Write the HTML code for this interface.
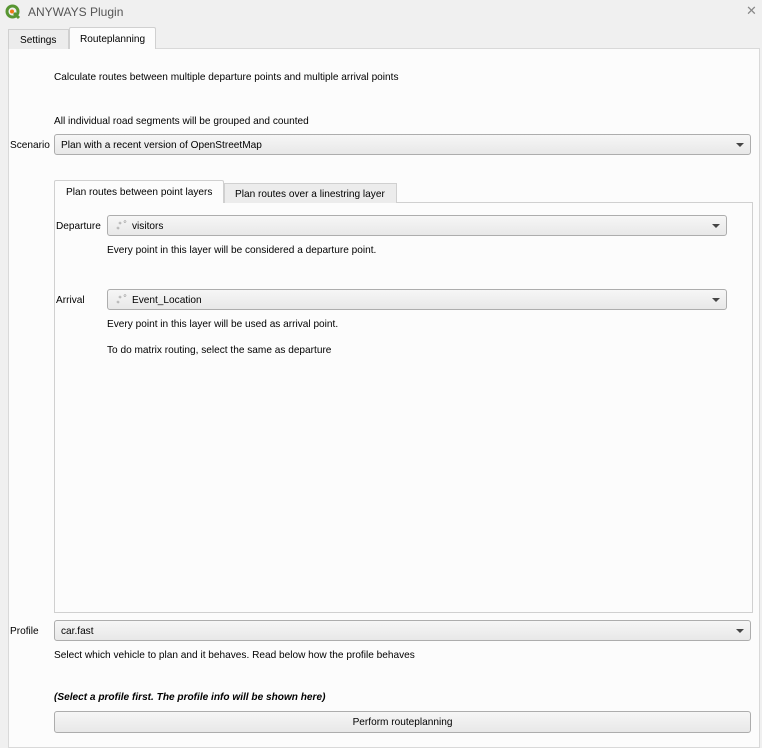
<!DOCTYPE html>
<html><head><style>
body{margin:0;width:762px;height:741px;background:#f0f0f0;font-family:"Liberation Sans",Tahoma,sans-serif;font-size:10.1px;color:#000;position:relative;overflow:hidden}
.a{position:absolute;white-space:nowrap}
.combo{position:absolute;height:21px;border:1px solid #adadad;border-radius:3px;background:linear-gradient(#f6f6f6,#e8e8e8);box-sizing:border-box}
.combo span{position:absolute;left:6px;top:4px}
.combo i{position:absolute;right:6px;top:8px;width:0;height:0;border-left:4px solid transparent;border-right:4px solid transparent;border-top:4px solid #444}
.dots{position:absolute;left:8px;top:4px;width:12px;height:12px}
</style></head><body>
<svg class="a" style="left:5px;top:4px" width="16" height="16" viewBox="0 0 16 16"><circle cx="7.5" cy="7.5" r="5.5" fill="none" stroke="#589632" stroke-width="3"/><path d="M9 9 L14 14" stroke="#589632" stroke-width="3"/><circle cx="7" cy="7.5" r="2" fill="#ee7913"/></svg>
<div class="a" style="left:28px;top:5px;font-size:12px;color:#555">ANYWAYS Plugin</div>
<div class="a" style="left:746px;top:3px;font-size:13px;color:#888">✕</div>
<div class="a" style="left:8px;top:48px;width:752px;height:700px;background:#fcfcfc;border:1px solid #d9d9d9;box-sizing:border-box"></div>
<div class="a" style="left:8px;top:29px;width:61px;height:20px;background:#ececec;border:1px solid #d0d0d0;border-bottom:none;box-sizing:border-box"></div>
<div class="a" style="left:20px;top:35px">Settings</div>
<div class="a" style="left:69px;top:27px;width:87px;height:22px;background:#fcfcfc;border:1px solid #d0d0d0;border-bottom:none;border-radius:2px 2px 0 0;box-sizing:border-box"></div>
<div class="a" style="left:80px;top:34px">Routeplanning</div>
<div class="a" style="left:54px;top:72px">Calculate routes between multiple departure points and multiple arrival points</div>
<div class="a" style="left:54px;top:116px">All individual road segments will be grouped and counted</div>
<div class="a" style="left:10px;top:140px">Scenario</div>
<div class="combo" style="left:54px;top:134px;width:697px"><span style="top:5px">Plan with a recent version of OpenStreetMap</span><i></i></div>
<div class="a" style="left:54px;top:202px;width:699px;height:411px;border:1px solid #d0d0d0;box-sizing:border-box;background:#fcfcfc"></div>
<div class="a" style="left:224px;top:183px;width:173px;height:20px;background:#ececec;border:1px solid #d0d0d0;border-bottom:none;box-sizing:border-box"></div>
<div class="a" style="left:235px;top:189px">Plan routes over a linestring layer</div>
<div class="a" style="left:54px;top:180px;width:170px;height:23px;background:#fcfcfc;border:1px solid #d0d0d0;border-bottom:none;border-radius:2px 2px 0 0;box-sizing:border-box"></div>
<div class="a" style="left:66px;top:187px">Plan routes between point layers</div>
<div class="a" style="left:56px;top:221px">Departure</div>
<div class="combo" style="left:107px;top:215px;width:620px"><svg class="dots" viewBox="0 0 12 12"><circle cx="2" cy="8" r="1" fill="none" stroke="#999" stroke-width=".6"/><circle cx="4" cy="3" r="1" fill="none" stroke="#999" stroke-width=".6"/><circle cx="9" cy="1.5" r="1" fill="none" stroke="#999" stroke-width=".6"/></svg><span style="left:24px;top:5px">visitors</span><i></i></div>
<div class="a" style="left:107px;top:245px">Every point in this layer will be considered a departure point.</div>
<div class="a" style="left:56px;top:295px">Arrival</div>
<div class="combo" style="left:107px;top:289px;width:620px"><svg class="dots" viewBox="0 0 12 12"><circle cx="2" cy="8" r="1" fill="none" stroke="#999" stroke-width=".6"/><circle cx="4" cy="3" r="1" fill="none" stroke="#999" stroke-width=".6"/><circle cx="9" cy="1.5" r="1" fill="none" stroke="#999" stroke-width=".6"/></svg><span style="left:24px;top:5px">Event_Location</span><i></i></div>
<div class="a" style="left:107px;top:319px">Every point in this layer will be used as arrival point.</div>
<div class="a" style="left:107px;top:345px">To do matrix routing, select the same as departure</div>
<div class="a" style="left:10px;top:626px">Profile</div>
<div class="combo" style="left:54px;top:620px;width:697px"><span style="top:5px">car.fast</span><i></i></div>
<div class="a" style="left:54px;top:650px">Select which vehicle to plan and it behaves. Read below how the profile behaves</div>
<div class="a" style="left:54px;top:692px;font-weight:bold;font-style:italic">(Select a profile first. The profile info will be shown here)</div>
<div class="combo" style="left:54px;top:711px;width:697px;height:22px"><span style="left:0;right:0;text-align:center;top:5px">Perform routeplanning</span></div>
</body></html>
